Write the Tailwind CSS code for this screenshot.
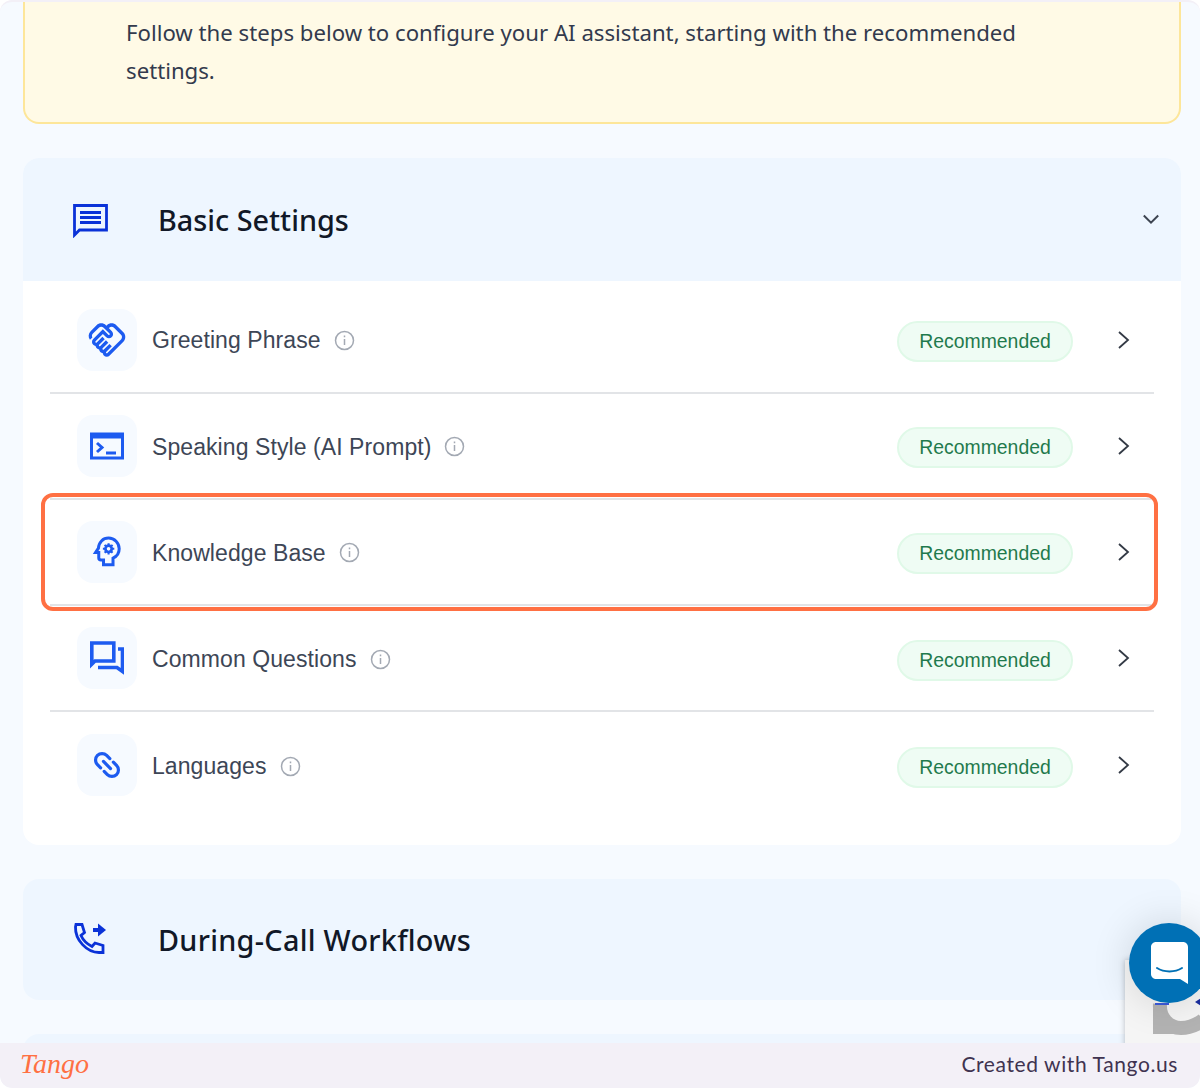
<!DOCTYPE html>
<html lang="en">
  <head>
    <meta charset="UTF-8" />
    <title>AI assistant settings</title>
    <script src="https://cdn.jsdelivr.net/npm/@tailwindcss/browser@4"></script>
  </head>
  <body class="bg-white">
    <div class="relative h-[1088px] w-[1200px] overflow-hidden rounded-xl border-t-2 border-[#f3f0f7] bg-[#f6faff] font-['Noto_Sans',sans-serif]">
      <div class="ml-[23px] mr-[19px] flex h-[122px] flex-col rounded-b-2xl border-2 border-t-0 border-[#fde69a] bg-[#fffae6] pl-[101px] pr-[120px] pt-[12px] text-[22.2px] leading-[38px] text-[#333a4d]">
        <p>Follow the steps below to configure your AI assistant, starting with the recommended settings.</p>
      </div>

      <!-- Basic settings -->
      <section class="ml-[23px] mr-[19px] mt-[34px] overflow-hidden rounded-2xl bg-white">
        <div class="flex h-[123px] items-center justify-between bg-[#eef6ff] pl-[49px] pr-[21px]">
          <div class="flex items-center gap-[50px]">
            <svg class="h-[36px] w-[36px]" viewBox="0 0 36 36" fill="none" stroke="#0a32d8" stroke-width="2.800">
              <path d="M2.500 3.500h32v24.500h-27l-5 5z" />
              <path d="M8 10.500h21M8 15.500h21M8 20.500h21" />
            </svg>
            <h2 class="text-[28.800px] font-medium text-[#111827]">Basic Settings</h2>
          </div>
          <svg class="h-[18px] w-[18px]" viewBox="0 0 20 20" fill="none" stroke="#3d4451" stroke-width="2.200"><path d="M2 5l8 8 8-8" /></svg>
        </div>

        <div class="px-[27px] pb-[26.500px] pt-[6.500px]">
          <!-- Greeting -->
          <div class="flex h-[106.200px] items-center justify-between border-b-2 border-[#e2e4e7] pl-[27px] pr-[23px]">
            <div class="flex items-center">
              <div class="flex h-[62px] w-[60px] items-center justify-center rounded-2xl bg-[#f6faff]">
                <svg class="h-[40px] w-[40px]" viewBox="0 0 24 24" fill="#1d5bf0"><path d="M12.220 19.850c-.18.18-.5.21-.71 0-.18-.18-.21-.5 0-.71l3.390-3.390-1.410-1.410-3.390 3.390c-.19.2-.51.19-.71 0-.21-.21-.18-.53 0-.71l3.390-3.390-1.410-1.410-3.390 3.390c-.18.18-.5.21-.71 0-.19-.19-.19-.51 0-.71l3.390-3.390-1.420-1.410-3.390 3.390c-.18.18-.5.21-.71 0-.19-.2-.19-.51 0-.71L9.520 8.400l1.870 1.860c.95.95 2.590.94 3.540 0 .98-.98.98-2.560 0-3.540l-1.860-1.860.28-.28c.78-.78 2.050-.78 2.830 0l4.240 4.240c.78.78.78 2.050 0 2.830l-8.200 8.200zM21.830 13.070c1.560-1.560 1.560-4.090 0-5.660l-4.240-4.240c-1.560-1.560-4.090-1.560-5.660 0l-.28.28-.28-.28c-1.560-1.560-4.090-1.560-5.660 0L2.170 6.710c-1.420 1.420-1.550 3.630-.4 5.190l1.450-1.450c-.39-.75-.26-1.700.37-2.330l3.540-3.540c.78-.78 2.050-.78 2.830 0l3.560 3.560c.18.18.21.5 0 .71-.21.21-.53.18-.71 0L9.520 5.570l-5.800 5.790c-.98.97-.98 2.560 0 3.540.39.39.89.63 1.420.7.07.52.3 1.020.7 1.420.4.4.9.63 1.420.7.07.52.3 1.020.7 1.420.4.4.9.63 1.420.7.07.54.31 1.030.7 1.420.47.47 1.100.73 1.770.73.67 0 1.300-.26 1.770-.73l8.210-8.210z" /></svg>
              </div>
              <span class="ml-[15px] mt-[2px] font-['Liberation_Sans',sans-serif] text-[23px] tracking-[0.08px] text-[#3d4656]">Greeting Phrase</span>
              <svg class="ml-[13px] mt-[2px] h-[21px] w-[21px]" viewBox="0 0 21 21" fill="none" stroke="#a3a9b3" stroke-width="1.500"><circle cx="10.500" cy="10.500" r="9" /><path d="M10.500 9v6M10.500 5.500v1.800" /></svg>
            </div>
            <div class="flex items-center gap-[44px]">
              <span class="mt-[4px] flex h-[41px] w-[176px] items-center justify-center rounded-full border-2 border-[#e0f9e8] bg-[#effcf4] font-['Liberation_Sans',sans-serif] text-[19.400px] text-[#1f7a4d]">Recommended</span>
              <svg class="h-[20px] w-[14px]" viewBox="0 0 14 20" fill="none" stroke="#333a45" stroke-width="1.800"><path d="M2 2l9 8-9 8" /></svg>
            </div>
          </div>

          <!-- Speaking style -->
          <div class="flex h-[106.200px] items-center justify-between border-b-2 border-[#e2e4e7] pl-[27px] pr-[23px]">
            <div class="flex items-center">
              <div class="flex h-[62px] w-[60px] items-center justify-center rounded-2xl bg-[#f6faff]">
                <svg class="h-[28px] w-[34px]" viewBox="0 0 34 28" fill="none" stroke="#1d5bf0" stroke-width="3">
                  <path d="M1.500 2h31v24h-31z" />
                  <path d="M1.500 4h31" stroke-width="5" />
                  <path d="M7 11l5 4.500-5 4.500M16 21h10" />
                </svg>
              </div>
              <span class="ml-[15px] mt-[2px] font-['Liberation_Sans',sans-serif] text-[23px] tracking-[0.08px] text-[#3d4656]">Speaking Style (AI Prompt)</span>
              <svg class="ml-[13px] mt-[2px] h-[21px] w-[21px]" viewBox="0 0 21 21" fill="none" stroke="#a3a9b3" stroke-width="1.500"><circle cx="10.500" cy="10.500" r="9" /><path d="M10.500 9v6M10.500 5.500v1.800" /></svg>
            </div>
            <div class="flex items-center gap-[44px]">
              <span class="mt-[4px] flex h-[41px] w-[176px] items-center justify-center rounded-full border-2 border-[#e0f9e8] bg-[#effcf4] font-['Liberation_Sans',sans-serif] text-[19.400px] text-[#1f7a4d]">Recommended</span>
              <svg class="h-[20px] w-[14px]" viewBox="0 0 14 20" fill="none" stroke="#333a45" stroke-width="1.800"><path d="M2 2l9 8-9 8" /></svg>
            </div>
          </div>

          <!-- Knowledge base -->
          <div class="flex h-[106.200px] items-center justify-between border-b-2 border-[#e2e4e7] pl-[27px] pr-[23px]">
            <div class="flex items-center">
              <div class="flex h-[62px] w-[60px] items-center justify-center rounded-2xl bg-[#f6faff]">
                <svg class="h-[38px] w-[38px]" viewBox="0 0 24 24" fill="none" stroke="#1d5bf0" stroke-width="1.900">
                  <path d="M13 3.200C9.400 3.200 6.800 5.900 6.600 9.600l-1.800 2.700H6.800v3.400c0 .8.600 1.400 1.400 1.400h1.600v3h6v-4.200c2.300-1 3.900-3.200 3.900-5.900 0-3.700-3-6.800-6.700-6.800z" />
                  <circle cx="13" cy="10" r="2" stroke-width="1.700" />
                  <path d="M13 6.400v1.400M13 12.200v1.400M9.400 10h1.400M15.200 10h1.400M10.500 7.500l1 1M14.500 11.500l1 1M15.500 7.500l-1 1M11.500 11.500l-1 1" stroke-width="1.300" />
                </svg>
              </div>
              <span class="ml-[15px] mt-[2px] font-['Liberation_Sans',sans-serif] text-[23px] tracking-[0.08px] text-[#3d4656]">Knowledge Base</span>
              <svg class="ml-[13px] mt-[2px] h-[21px] w-[21px]" viewBox="0 0 21 21" fill="none" stroke="#a3a9b3" stroke-width="1.500"><circle cx="10.500" cy="10.500" r="9" /><path d="M10.500 9v6M10.500 5.500v1.800" /></svg>
            </div>
            <div class="flex items-center gap-[44px]">
              <span class="mt-[4px] flex h-[41px] w-[176px] items-center justify-center rounded-full border-2 border-[#e0f9e8] bg-[#effcf4] font-['Liberation_Sans',sans-serif] text-[19.400px] text-[#1f7a4d]">Recommended</span>
              <svg class="h-[20px] w-[14px]" viewBox="0 0 14 20" fill="none" stroke="#333a45" stroke-width="1.800"><path d="M2 2l9 8-9 8" /></svg>
            </div>
          </div>

          <!-- Common questions -->
          <div class="flex h-[106.200px] items-center justify-between border-b-2 border-[#e2e4e7] pl-[27px] pr-[23px]">
            <div class="flex items-center">
              <div class="flex h-[62px] w-[60px] items-center justify-center rounded-2xl bg-[#f6faff]">
                <svg class="h-[34px] w-[34px]" viewBox="0 0 34 34" fill="none" stroke="#1d5bf0" stroke-width="3.600">
                  <path d="M1.800 2h22v18H5l-3.200 3.200z" />
                  <path d="M28 8h4.500v22.500L27 26.500H8" />
                </svg>
              </div>
              <span class="ml-[15px] mt-[2px] font-['Liberation_Sans',sans-serif] text-[23px] tracking-[0.08px] text-[#3d4656]">Common Questions</span>
              <svg class="ml-[13px] mt-[2px] h-[21px] w-[21px]" viewBox="0 0 21 21" fill="none" stroke="#a3a9b3" stroke-width="1.500"><circle cx="10.500" cy="10.500" r="9" /><path d="M10.500 9v6M10.500 5.500v1.800" /></svg>
            </div>
            <div class="flex items-center gap-[44px]">
              <span class="mt-[4px] flex h-[41px] w-[176px] items-center justify-center rounded-full border-2 border-[#e0f9e8] bg-[#effcf4] font-['Liberation_Sans',sans-serif] text-[19.400px] text-[#1f7a4d]">Recommended</span>
              <svg class="h-[20px] w-[14px]" viewBox="0 0 14 20" fill="none" stroke="#333a45" stroke-width="1.800"><path d="M2 2l9 8-9 8" /></svg>
            </div>
          </div>

          <!-- Languages -->
          <div class="flex h-[106.200px] items-center justify-between pl-[27px] pr-[23px]">
            <div class="flex items-center">
              <div class="flex h-[62px] w-[60px] items-center justify-center rounded-2xl bg-[#f6faff]">
                <svg class="h-[34px] w-[34px]" viewBox="0 0 34 34" fill="none" stroke="#1d5bf0" stroke-width="3.200" stroke-linecap="round">
                  <g transform="rotate(45 17 17)">
                    <path d="M14.500 10.500H10a6.500 6.500 0 0 0 0 13h4.500" />
                    <path d="M19.500 10.500H24a6.500 6.500 0 0 1 0 13h-4.500" />
                    <path d="M12 17h10" />
                  </g>
                </svg>
              </div>
              <span class="ml-[15px] mt-[2px] font-['Liberation_Sans',sans-serif] text-[23px] tracking-[0.08px] text-[#3d4656]">Languages</span>
              <svg class="ml-[13px] mt-[2px] h-[21px] w-[21px]" viewBox="0 0 21 21" fill="none" stroke="#a3a9b3" stroke-width="1.500"><circle cx="10.500" cy="10.500" r="9" /><path d="M10.500 9v6M10.500 5.500v1.800" /></svg>
            </div>
            <div class="flex items-center gap-[44px]">
              <span class="mt-[4px] flex h-[41px] w-[176px] items-center justify-center rounded-full border-2 border-[#e0f9e8] bg-[#effcf4] font-['Liberation_Sans',sans-serif] text-[19.400px] text-[#1f7a4d]">Recommended</span>
              <svg class="h-[20px] w-[14px]" viewBox="0 0 14 20" fill="none" stroke="#333a45" stroke-width="1.800"><path d="M2 2l9 8-9 8" /></svg>
            </div>
          </div>
        </div>
      </section>

      <!-- During-call workflows -->
      <section class="ml-[23px] mr-[19px] mt-[34px] flex h-[121px] items-center gap-[50px] rounded-2xl bg-[#eef6ff] pl-[49px]">
        <svg class="h-[36px] w-[36px]" viewBox="0 0 36 36" fill="none" stroke="#0a32d8" stroke-width="2.800">
          <path d="M4 3.500h6l2.500 8-3.500 3c2 4.500 6 8.500 11 11l3-3.500 8 2.500v7h-4C15 31.500 3 19 3.500 6z" />
          <path d="M21 9h9" stroke-width="4" />
          <path d="M26 2.500l8 6.500-8 6.500z" fill="#0a32d8" stroke="none" />
        </svg>
        <h2 class="text-[28.800px] font-medium tracking-[0.3px] text-[#111827]">During-Call Workflows</h2>
      </section>

      <section class="ml-[23px] mr-[19px] mt-[34px] h-[60px] rounded-t-2xl bg-[#eef6ff]"></section>

      <!-- recaptcha badge -->
      <div class="absolute left-[1125px] top-[958px] h-[90px] w-[80px] bg-[#f5f5f5] shadow-[0_0_6px_rgba(0,0,0,0.25)]">
        <svg class="h-[90px] w-[80px]" viewBox="0 0 80 90" fill="none">
          <path d="M35 44C34 58 44 68 56 68 64 68 70 66 78 60" stroke="#b3b3b3" stroke-width="14" />
          <path d="M28 48V74H54z" fill="#b3b3b3" />
          <path d="M30 43h14v2H30z" fill="#3b5bdb" />
          <path d="M70 42l6-4v8z" fill="#1a2fa0" />
        </svg>
      </div>

      <!-- chat launcher -->
      <div class="absolute left-[1129px] top-[921px] flex h-[80px] w-[80px] items-center justify-center rounded-full bg-[#0070b5] shadow-[0_0_40px_rgba(0,0,0,0.14)]">
        <svg class="h-[43px] w-[37px]" viewBox="0 0 37 43" fill="none">
          <path d="M5 0h27c2.800 0 5 2.200 5 5v37l-8-5H5c-2.800 0-5-2.200-5-5V5c0-2.800 2.200-5 5-5z" fill="#fff" />
          <path d="M6 26c7 4.500 18 4.500 25 0" stroke="#0070b5" stroke-width="2" stroke-linecap="round" />
        </svg>
      </div>

      <!-- Tango footer -->
      <footer class="absolute inset-x-0 bottom-0 flex h-[45px] items-center justify-between rounded-b-xl bg-[#f3f0f7] pb-[4px] pl-[20px] pr-[22px]">
        <span class="font-['Liberation_Serif',serif] text-[28px] italic text-[#ff7043]">Tango</span>
        <span class="font-['Lato',sans-serif] text-[21px] tracking-[0.6px] text-[#3f3350]">Created with Tango.us</span>
      </footer>

      <!-- highlight -->
      <div class="absolute left-[41px] top-[491px] h-[118px] w-[1117px] rounded-xl border-4 border-[#ff7043]"></div>
    </div>
  </body>
</html>
